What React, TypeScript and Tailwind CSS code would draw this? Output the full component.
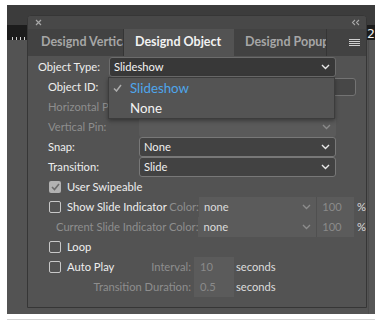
import React from "react";

const Chevron = ({ color = "#e8e8e8" }: { color?: string }) => (
  <svg width="9" height="6" viewBox="0 0 9 6" className="shrink-0">
    <polyline points="1,1 4.5,4.5 8,1" fill="none" stroke={color} strokeWidth="1.4" />
  </svg>
);

const Select = ({ value, width, disabled }: { value?: string; width: string; disabled?: boolean }) => (
  <div
    className={`${width} h-[20px] flex items-center justify-between pl-[4px] pr-[5px] rounded-[3px] ${
      disabled ? "bg-[#5a5a5a]" : "bg-[#424242] border border-[#787878]"
    }`}
  >
    <span className="text-[#f0f0f0]">{value}</span>
    <Chevron color={disabled ? "#8a8a8a" : "#e8e8e8"} />
  </div>
);

const Checkbox = ({ checked }: { checked?: boolean }) =>
  checked ? (
    <div className="w-[12px] h-[12px] rounded-[2px] bg-[#b2b2b2] flex items-center justify-center shrink-0">
      <svg width="9" height="8" viewBox="0 0 9 8">
        <polyline points="1,4 3.5,6.5 8,1" fill="none" stroke="#6b6b6b" strokeWidth="1.6" />
      </svg>
    </div>
  ) : (
    <div className="w-[12px] h-[12px] rounded-[2px] border border-[#c8c8c8] shrink-0" />
  );

const ColorRow = ({ children }: { children: React.ReactNode }) => (
  <div className="h-[20px] flex items-center">
    <div className="w-[171px] flex items-center whitespace-nowrap">{children}</div>
    <div className="w-[118px] h-[20px] bg-[#5b5b5b] flex items-center justify-between pl-[5px] pr-[5px]">
      <span className="text-[#dcdcdc]">none</span>
      <Chevron color="#8c8c8c" />
    </div>
    <div className="w-[38px] h-[20px] bg-[#5b5b5b] border-l border-[#505050] pl-[5px] flex items-center text-[#8a8a8a]">
      100
    </div>
    <span className="ml-[3px] text-[#dcdcdc]">%</span>
  </div>
);

const TimeRow = ({ left, value }: { left: React.ReactNode; value: string }) => (
  <div className="h-[20px] flex items-center">
    <div className="w-[163px] flex items-center justify-between whitespace-nowrap">{left}</div>
    <div className="ml-[3px] w-[40px] h-[20px] bg-[#5b5b5b] flex items-center pl-[6px] text-[#8a8a8a]">{value}</div>
    <span className="ml-[2px] text-[#dcdcdc]">seconds</span>
  </div>
);

export default function App() {
  return (
    <div className="w-[383px] h-[323px] bg-white pt-[5px] pl-[7px] font-['Lato','Liberation_Sans',sans-serif] text-[11.2px] leading-none">
      <div className="w-[368px] h-[315px] bg-white pb-[6px] border-b border-[#d4d4d4]">
        {/* desktop behind the panel */}
        <div className="relative w-[368px] h-[309px] bg-[#535353] flex flex-col">
          <div className="h-[20px] bg-[#3c3c3c]" />
          <div className="h-[15px] flex justify-between bg-[#535353]">
            <svg width="20" height="15" viewBox="0 0 20 15">
              <rect width="20" height="15" fill="#1c1c1c" />
              {[5, 9, 13, 17].map((x) => (
                <rect key={x} x={x} y="12" width="1" height="3" fill="#d0d0d0" />
              ))}
            </svg>
            <div className="w-[8px] bg-[#1c1c1c] text-[#f0f0f0] text-[13px] flex items-start pt-[2px] justify-center font-['DejaVu_Sans_Mono',monospace]">
              2
            </div>
          </div>
          <div className="flex-1 flex justify-end">
            <div className="w-[7px] bg-[#565656] border-l border-[#4c4c4c]" />
          </div>

          {/* floating panel */}
          <div className="absolute left-[20px] top-[10px] w-[340px] h-[293px] rounded-t-[4px] border border-[#363636] bg-[#535353] overflow-hidden flex flex-col">
            <div className="h-[13px] bg-[#484848] flex items-center justify-between pl-[7px] pr-[6px] text-[#a8a8a8]">
              <svg width="7" height="7" viewBox="0 0 7 7">
                <path d="M1 1 L6 6 M6 1 L1 6" stroke="#a8a8a8" strokeWidth="1.2" />
              </svg>
              <svg width="9" height="7" viewBox="0 0 9 7">
                <path d="M4 1 L1.5 3.5 L4 6 M8 1 L5.5 3.5 L8 6" fill="none" stroke="#a8a8a8" strokeWidth="1.1" />
              </svg>
            </div>
            <div className="h-[27px] flex bg-[#424242] font-bold text-[12.5px] whitespace-nowrap">
              <div className="w-[96px] pl-[13px] flex items-center overflow-hidden text-[#a6a6a6] border-r border-[#353535]">
                Designd Vertical
              </div>
              <div className="w-[110px] pl-[11px] flex items-center bg-[#535353] text-[#f2f2f2]">Designd Object</div>
              <div className="w-[93px] pl-[11px] flex items-center overflow-hidden text-[#a6a6a6] border-r border-[#353535]">
                Designd Popup
              </div>
              <div className="flex-1 flex items-center justify-end pr-[6px]">
                <svg width="11" height="7" viewBox="0 0 11 7" shapeRendering="crispEdges">
                  {[0, 2, 4, 6].map((y) => (
                    <rect key={y} x="0" y={y} width="11" height="1" fill="#cfcfcf" />
                  ))}
                </svg>
              </div>
            </div>

            <div className="relative flex-1 flex flex-col pt-[1px] text-[#eeeeee]">
              <div className="h-[20px] flex items-center">
                <span className="w-[81px] pl-[10px]">Object Type:</span>
                <div className="w-[227px] h-[20px] flex items-center justify-between pl-[4px] pr-[5px] rounded-[3px] bg-[#383838] border border-[#6c6c6c]">
                  <span className="text-[#f4f4f4]">Slideshow</span>
                  <Chevron />
                </div>
              </div>
              <div className="h-[20px] flex items-center">
                <span className="w-[111px] pl-[20px]">Object ID:</span>
                <div className="w-[217px] h-[18px] rounded-[3px] bg-[#474747] border border-[#737373]" />
              </div>
              <div className="h-[20px] flex items-center text-[#8e8e8e]">
                <span className="w-[111px] pl-[20px] whitespace-nowrap">Horizontal Pin:</span>
              </div>
              <div className="h-[20px] flex items-center">
                <span className="w-[111px] pl-[20px] text-[#8e8e8e]">Vertical Pin:</span>
                <Select width="w-[197px]" disabled />
              </div>
              <div className="h-[20px] flex items-center">
                <span className="w-[111px] pl-[20px]">Snap:</span>
                <Select width="w-[197px]" value="None" />
              </div>
              <div className="h-[20px] flex items-center">
                <span className="w-[111px] pl-[20px]">Transition:</span>
                <Select width="w-[197px]" value="Slide" />
              </div>
              <div className="h-[20px] flex items-center pl-[21px] gap-[6px]">
                <Checkbox checked />
                <span>User Swipeable</span>
              </div>
              <ColorRow>
                <div className="pl-[21px] flex items-center gap-[6px]">
                  <Checkbox />
                  <span>
                    Show Slide Indicator <span className="text-[#8e8e8e]">Color:</span>
                  </span>
                </div>
              </ColorRow>
              <ColorRow>
                <span className="pl-[28px] text-[#8e8e8e]">Current Slide Indicator Color:</span>
              </ColorRow>
              <div className="h-[20px] flex items-center pl-[21px] gap-[6px]">
                <Checkbox />
                <span>Loop</span>
              </div>
              <TimeRow
                value="10"
                left={
                  <>
                    <div className="pl-[21px] flex items-center gap-[6px]">
                      <Checkbox />
                      <span>Auto Play</span>
                    </div>
                    <span className="text-[#8e8e8e]">Interval:</span>
                  </>
                }
              />
              <TimeRow
                value="0.5"
                left={
                  <>
                    <span />
                    <span className="text-[#8e8e8e]">Transition Duration:</span>
                  </>
                }
              />

              {/* open dropdown of Object Type */}
              <div className="absolute left-[80px] top-[21px] w-[227px] h-[42px] bg-[#545454] border border-[#3c3c3c] shadow-[0_2px_4px_rgba(0,0,0,0.35)] flex flex-col text-[13.3px]">
                <div className="h-[21px] flex items-center">
                  <span className="w-[21px] pl-[4px] flex items-center">
                    <svg width="9" height="8" viewBox="0 0 9 8">
                      <polyline points="1,4.5 3.5,7 8,1" fill="none" stroke="#acacac" strokeWidth="1.5" />
                    </svg>
                  </span>
                  <span className="text-[#4ea6ec]">Slideshow</span>
                </div>
                <div className="h-[20px] flex items-center pl-[21px] text-[#f2f2f2]">None</div>
              </div>
            </div>
          </div>
        </div>
      </div>
    </div>
  );
}
